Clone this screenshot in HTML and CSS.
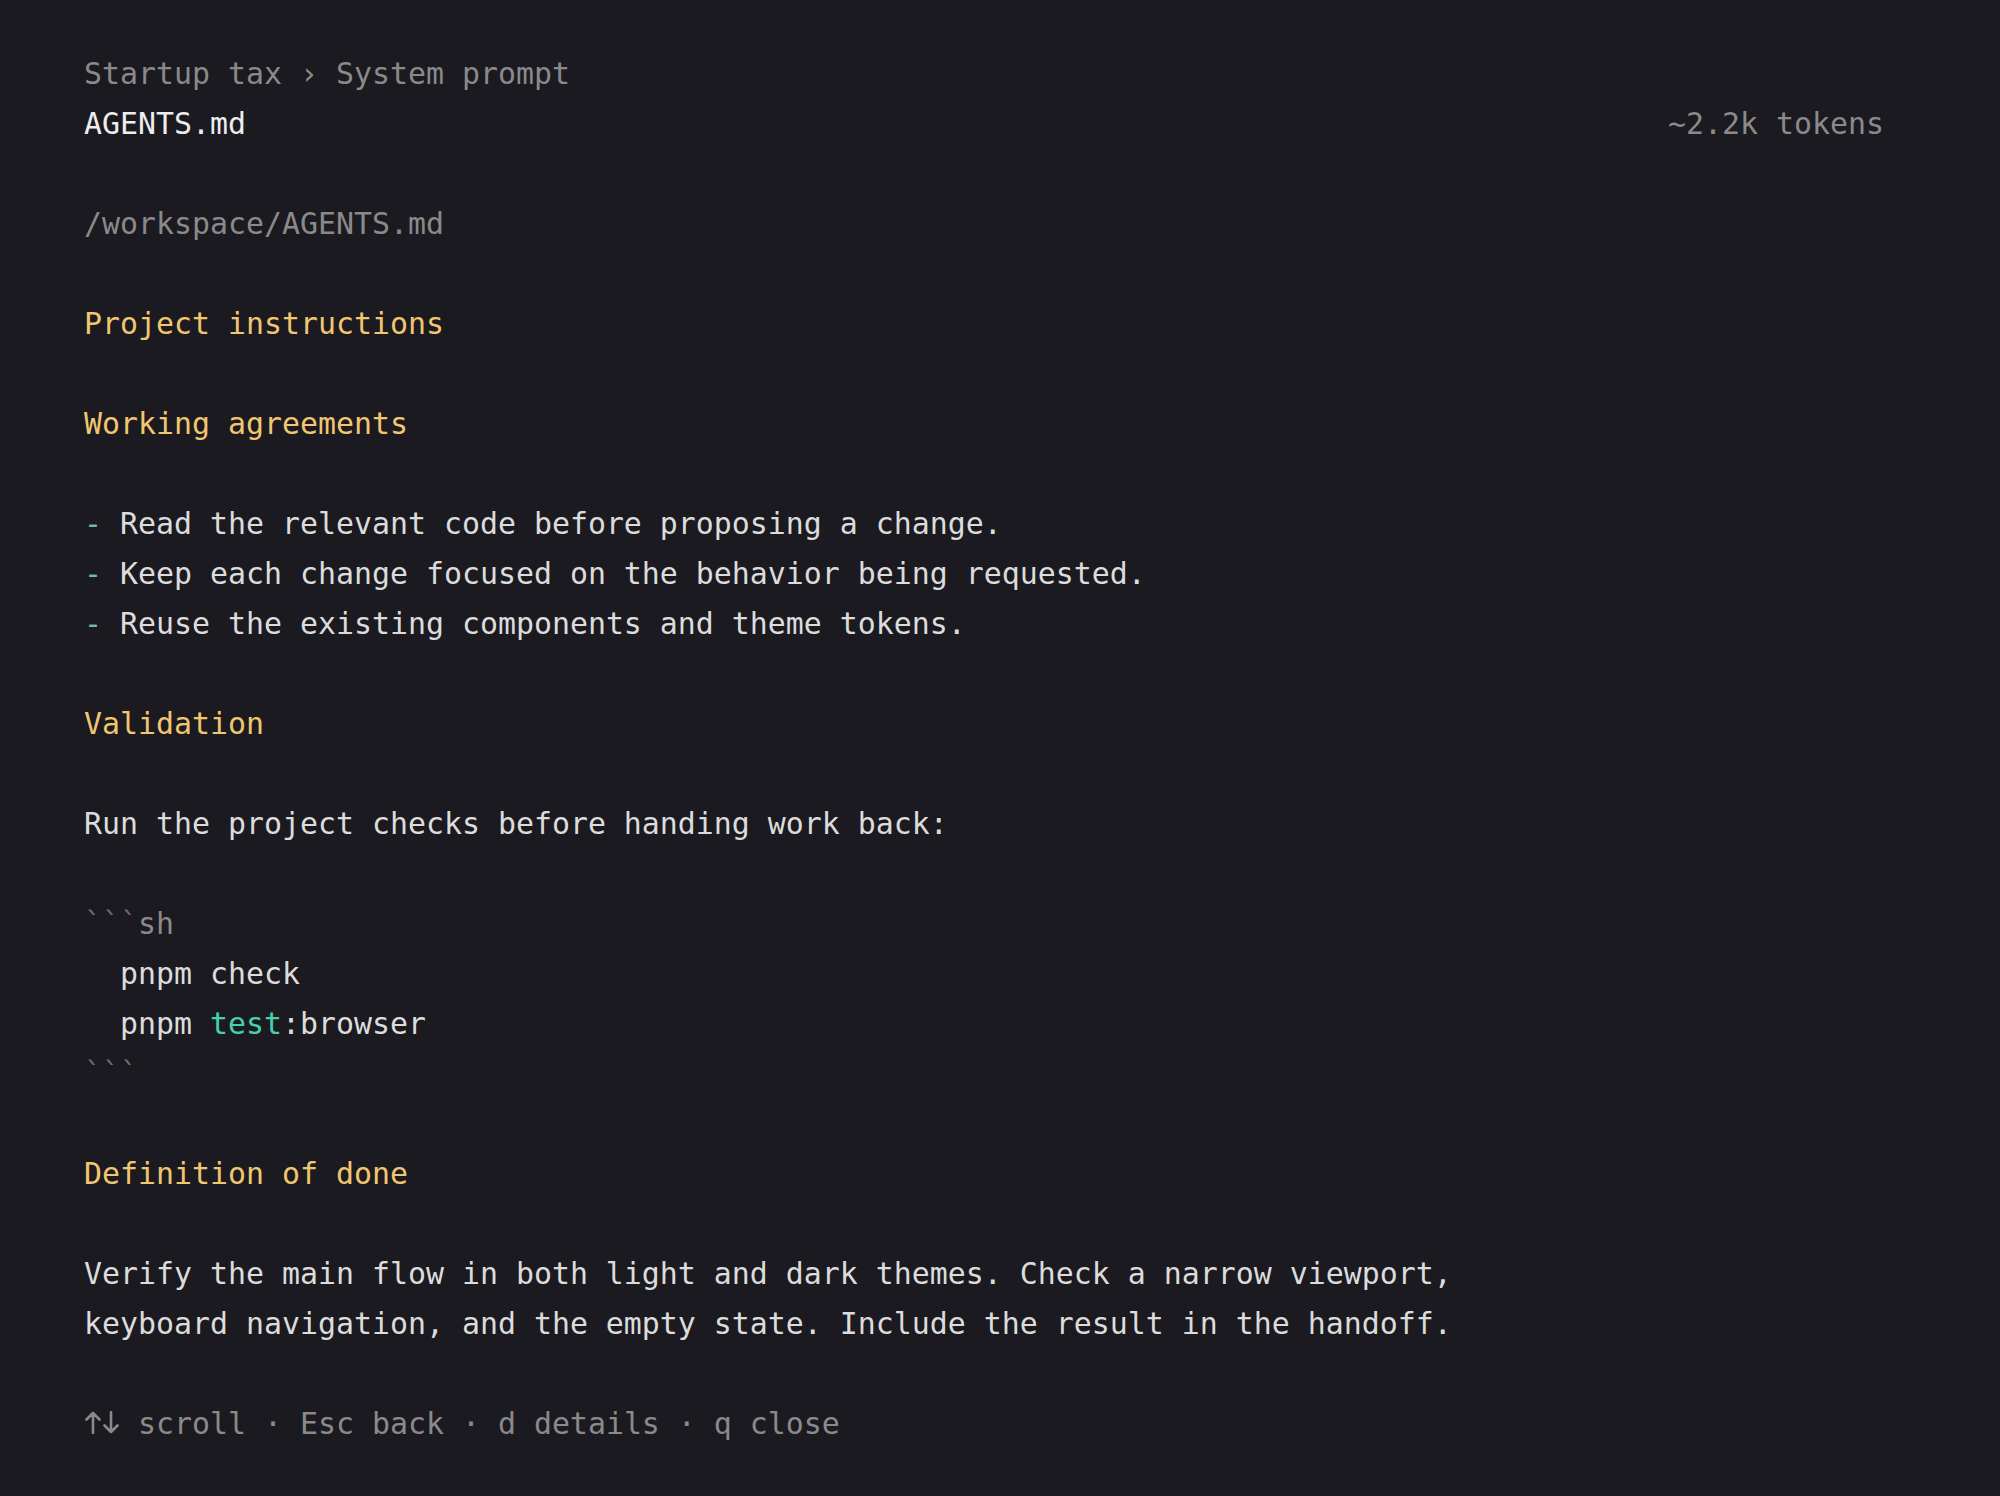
FILE: index.html
```html
<!DOCTYPE html>
<html lang="en">
<head>
<meta charset="utf-8">
<title>AGENTS.md</title>
<link rel="stylesheet" href="styles.css">
</head>
<body>
<main class="screen">
  <div class="line dim">Startup tax › System prompt</div>
  <div class="line titlebar">
    <span class="title">AGENTS.md</span>
    <span class="dim">~2.2k tokens</span>
  </div>
  <div class="gap"></div>
  <div class="line dim">/workspace/AGENTS.md</div>
  <div class="gap"></div>
  <div class="line heading">Project instructions</div>
  <div class="gap"></div>
  <div class="line heading">Working agreements</div>
  <div class="gap"></div>
  <div class="line"><span class="bullet">-</span> Read the relevant code before proposing a change.</div>
  <div class="line"><span class="bullet">-</span> Keep each change focused on the behavior being requested.</div>
  <div class="line"><span class="bullet">-</span> Reuse the existing components and theme tokens.</div>
  <div class="gap"></div>
  <div class="line heading">Validation</div>
  <div class="gap"></div>
  <div class="line">Run the project checks before handing work back:</div>
  <div class="gap"></div>
  <div class="line"><span class="fence">```</span><span class="dim">sh</span></div>
  <div class="line">  pnpm check</div>
  <div class="line">  pnpm <span class="kw">test</span>:browser</div>
  <div class="line"><span class="fence">```</span></div>
  <div class="gap"></div>
  <div class="line heading">Definition of done</div>
  <div class="gap"></div>
  <div class="line">Verify the main flow in both light and dark themes. Check a narrow viewport,</div>
  <div class="line">keyboard navigation, and the empty state. Include the result in the handoff.</div>
  <div class="gap"></div>
  <div class="line dim"><svg class="arrows" viewBox="0 0 36 23" aria-label="↑↓"><path d="M9 22V2M2.5 8.5L9 2l6.5 6.5M27 1v20M20.5 14.5L27 21l6.5-6.5"/></svg> scroll · Esc back · d details · q close</div>
</main>
</body>
</html>
```

FILE: styles.css
```css
html, body {
  margin: 0;
  padding: 0;
  background: #1b1a20;
}

body {
  font-family: "DejaVu Sans Mono", "Liberation Mono", monospace;
  font-size: 29.9px;
  color: #dcdcdc;
  min-height: 1496px;
}

.screen {
  padding: 49px 116px 0 84px;
}

.line {
  height: 50px;
  line-height: 50px;
  white-space: pre;
}

.gap {
  height: 50px;
}

.titlebar {
  display: flex;
  justify-content: space-between;
}

.title {
  color: #ededed;
}

.dim {
  color: #8a8a8a;
}

.heading {
  color: #f1c671;
}

.bullet {
  color: #74b9aa;
}

.kw {
  color: #47cfad;
}

.fence {
  color: #6c6c6c;
}

.arrows {
  width: 36px;
  height: 23px;
  fill: none;
  stroke: #8a8a8a;
  stroke-width: 2.6;
  stroke-linecap: round;
  stroke-linejoin: round;
}
```
